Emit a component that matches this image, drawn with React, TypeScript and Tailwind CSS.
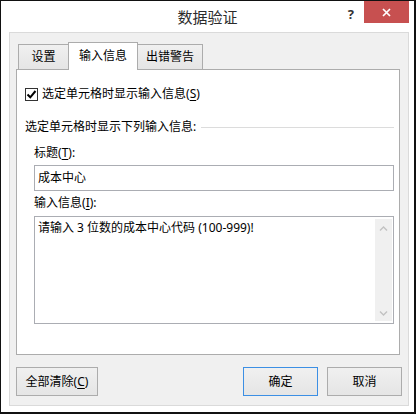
import React from 'react';

const font = "font-['Noto_Sans','Noto_Sans_CJK_SC',sans-serif]";

function Key({ k }: { k: string }) {
  return (
    <>
      (<span className="underline underline-offset-2">{k}</span>)
    </>
  );
}

function Button({
  children,
  width,
  primary
}: {
  children: React.ReactNode;
  width: string;
  primary?: boolean;
}) {
  return (
    <button
      className={`${width} h-[29px] flex items-center justify-center text-[12px] leading-none text-black bg-gradient-to-b from-[#f0f0f0] to-[#e5e5e5] border ${
        primary ? 'border-[#3c8fe4]' : 'border-[#acacac]'
      }`}
    >
      {children}
    </button>
  );
}

export default function App() {
  return (
    <div
      className={`w-[416px] h-[414px] bg-white border-t border-l border-r-2 border-b-2 border-[#111] ${font} text-black`}
    >
      {/* 标题栏 */}
      <div className="h-[31px] grid grid-cols-[1fr_auto_1fr]">
        <div />
        <div className="pt-[5px] text-[15px] leading-[22px] text-[#2b2b2b]">
          数据验证
        </div>
        <div className="flex justify-end items-start">
          <span className="mt-[5px] mr-[10px] text-[13px] leading-[16px] font-bold text-[#333]">
            ?
          </span>
          <div className="mr-[5px] w-[45px] h-[22px] bg-[#c75050] flex items-center justify-center">
            <svg width="9" height="9" viewBox="0 0 9 9">
              <path
                d="M1 1 L8 8 M8 1 L1 8"
                stroke="#fff"
                strokeWidth="1.7"
                fill="none"
              />
            </svg>
          </div>
        </div>
      </div>

      {/* 主面板 */}
      <div className="ml-[8px] w-[400px] h-[374px] border border-[#dadada] bg-[#f0f0f0] pt-[9px] pl-[6px]">
        {/* 标签页 */}
        <div className="relative z-10 -mb-px ml-[2px] h-[28px] flex items-end text-[12px] leading-none">
          <div className="w-[51px] h-[26px] border border-[#acacac] bg-gradient-to-b from-[#f0f0f0] to-[#e5e5e5] flex items-center justify-center">
            设置
          </div>
          <div className="-ml-px w-[70px] h-[28px] border border-b-0 border-[#acacac] bg-white flex items-center justify-center pb-[1px]">
            输入信息
          </div>
          <div className="-ml-px w-[66px] h-[26px] border border-[#acacac] bg-gradient-to-b from-[#f0f0f0] to-[#e5e5e5] flex items-center justify-center">
            出错警告
          </div>
        </div>

        {/* 内容 */}
        <div className="w-[384px] h-[286px] border border-[#acacac] bg-white pl-[8px] pr-[5px] pt-[16px] text-[12px]">
          <div className="h-[16px] flex items-center gap-[4px]">
            <div className="w-[13px] h-[13px] border border-[#333] bg-white flex items-center justify-center">
              <svg width="11" height="11" viewBox="0 0 11 11">
                <path
                  d="M1.5 5.5 L4.3 8.3 L9.5 2"
                  stroke="#000"
                  strokeWidth="2"
                  fill="none"
                />
              </svg>
            </div>
            <span className="leading-none">
              选定单元格时显示输入信息<Key k="S" />
            </span>
          </div>

          <div className="mt-[17px] h-[16px] flex items-center">
            <span className="leading-none">选定单元格时显示下列输入信息:</span>
            <div className="flex-1 ml-[5px] h-px bg-[#dcdcdc]" />
          </div>

          <div className="pl-[9px]">
            <div className="mt-[10px] h-[16px] flex items-center leading-none">
              标题<Key k="T" />:
            </div>
            <div className="mt-[4px] h-[26px] border border-[#abadb3] pl-[3px] flex items-center leading-none">
              成本中心
            </div>

            <div className="mt-[4px] h-[16px] flex items-center leading-none">
              输入信息<Key k="I" />:
            </div>
            <div className="mt-[5px] h-[108px] border border-[#abadb3] flex">
              <div className="flex-1 pl-[3px] pt-[3px] leading-[16px]">
                请输入 3 位数的成本中心代码 (100-999)!
              </div>
              <div className="w-[17px] my-[2px] mr-[1px] bg-[#f0f0f0] flex flex-col items-center justify-between pt-[7px] pb-[5px]">
                <svg width="9" height="5" viewBox="0 0 9 5">
                  <path d="M1 4.5 L4.5 1 L8 4.5" stroke="#c2c2c2" strokeWidth="1.4" fill="none" />
                </svg>
                <svg width="9" height="5" viewBox="0 0 9 5">
                  <path d="M1 0.5 L4.5 4 L8 0.5" stroke="#c2c2c2" strokeWidth="1.4" fill="none" />
                </svg>
              </div>
            </div>
          </div>
        </div>

        {/* 按钮 */}
        <div className="mt-[12px] pr-[6px] flex items-center">
          <Button width="w-[82px]">
            全部清除<Key k="C" />
          </Button>
          <div className="flex-1" />
          <Button width="w-[75px]" primary>
            确定
          </Button>
          <div className="w-[9px]" />
          <Button width="w-[75px]">取消</Button>
        </div>
      </div>
    </div>
  );
}
